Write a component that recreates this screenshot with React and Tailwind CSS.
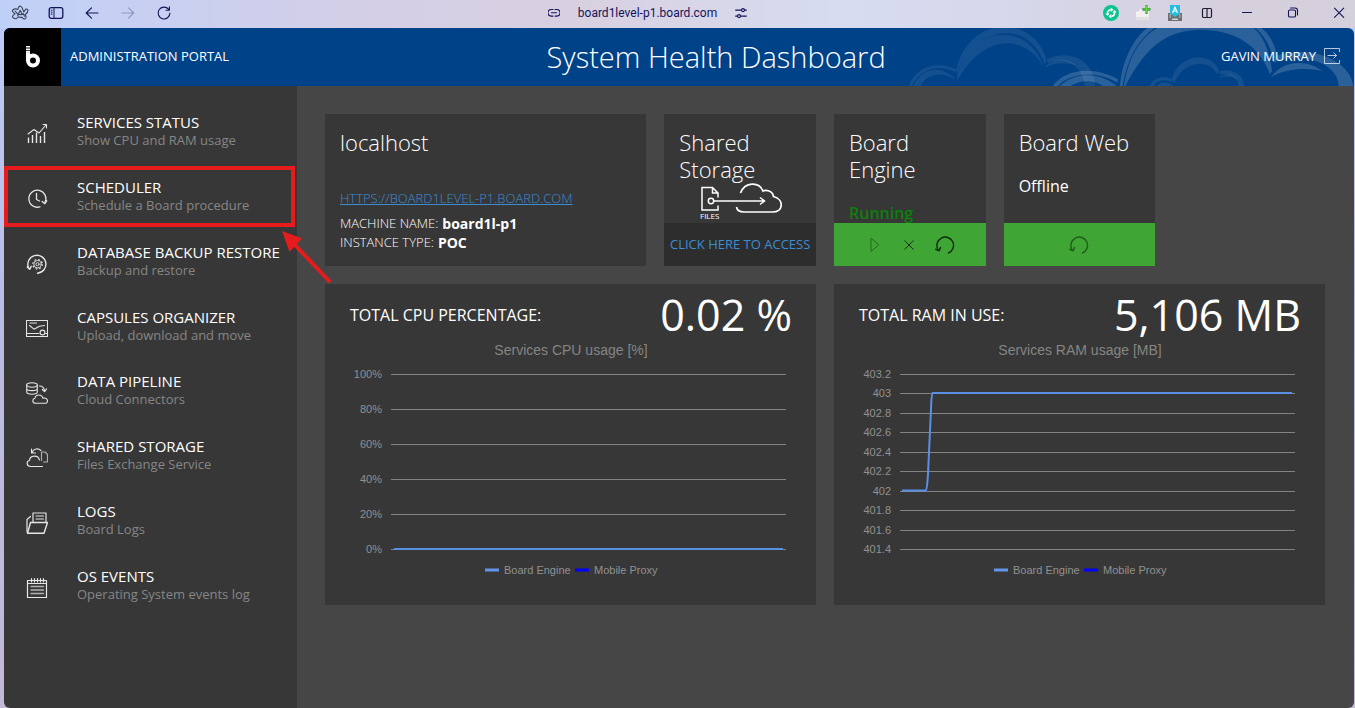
import React from "react";

const stroke = { fill: "none", stroke: "currentColor", strokeLinecap: "round", strokeLinejoin: "round" };

/* ---------- browser bar icons ---------- */

function Icon({ children, className = "size-4", box = "0 0 16 16", width = 1.1 }) {
  return (
    <svg viewBox={box} className={className} strokeWidth={width} aria-hidden="true" {...stroke}>
      {children}
    </svg>
  );
}

const ArcIcon = () => (
  <Icon className="size-4 overflow-visible text-[#3b3f55]" width={1.1}>
    <path d="M8.500 1.200c-1.300-.3-1.900.8-2.200 1.700L5.700 4.600 3.500 3.700C1.900 3.700.4 5 .4 6.200c.3 1.200 1.500 1.900 2.700 2.700-1.200.8-2.600 1.300-2.600 2.600.3 1.500 2 2.200 3.500 2.200 1-.1 1.700-1 2.300-1.900 1.200.5 2.500.7 3.800.4.6 1.200 1.300 2 2.600 1.700 1.300-.4 1.700-1.500 1.200-2.600l-.8-1.500c1.600-1.300 2.900-2.900 2.900-4.600-.3-1.500-2.500-1.500-2.900-.2-.2.800-.8 1.400-1.400 1.900l-1.500-4c-.3-.8-.8-1.500-1.700-1.700z" />
    <path d="M3.300 6.200c.8 1.300 2 2.500 3.400 3.200M8.200 5.200l-2.600 5.600M8.600 6l1.600 3.400M6.800 9.300c1.500.6 3 .3 4.600-.6M11.600 9.300l.9 2" />
  </Icon>
);

const SidebarIcon = () => (
  <Icon width={1.3}>
    <rect x="1.200" y="2.700" width="13.600" height="10.600" rx="2" />
    <path d="M6 2.700v10.600M3.200 5.200h.9M3.200 7.200h.9M3.200 9.200h.9" strokeWidth="1" />
  </Icon>
);

const LinkIcon = () => (
  <Icon className="size-3" box="0 0 12 12">
    <path d="M5 2.500H3.300a3.300 3.300 0 0 0 0 6.600H5M7 2.500h1.700a3.300 3.300 0 0 1 0 6.600H7M3.500 5.800h5" />
  </Icon>
);

const SlidersIcon = () => (
  <Icon className="size-3" box="0 0 12 12">
    <path d="M.6 3.100h5.800M9.600 3.100h1.800M.6 9.100h1.800M5.600 9.100h5.800" />
    <circle cx="8" cy="3.100" r="1.500" />
    <circle cx="4" cy="9.100" r="1.500" />
  </Icon>
);

function BarButton({ label, children, className = "" }) {
  return (
    <button type="button" aria-label={label} className={`flex size-4 items-center justify-center ${className}`}>
      {children}
    </button>
  );
}

function BrowserBar() {
  return (
    <div className="flex h-7 items-center justify-between pr-2 pb-[3px] pl-3 text-[#14145a]">
      <div className="flex gap-5">
        <BarButton label="Arc menu"><ArcIcon /></BarButton>
        <BarButton label="Toggle sidebar"><SidebarIcon /></BarButton>
        <BarButton label="Back">
          <Icon><path d="M14 8H2.200M7.500 2.800 2.200 8l5.300 5.200" /></Icon>
        </BarButton>
        <BarButton label="Forward" className="text-[#8f95c4]">
          <Icon><path d="M2 8h11.800M8.500 2.800 13.800 8l-5.300 5.200" /></Icon>
        </BarButton>
        <BarButton label="Reload">
          <Icon><path d="M12.500 4.200A5.900 5.900 0 1 0 13.900 8M13.400 1.800v3.400H10" /></Icon>
        </BarButton>
      </div>
      <div className="flex flex-1 items-center justify-center gap-[18px] pl-5">
        <LinkIcon />
        <span className="font-['Roboto','Open_Sans',sans-serif] text-[12px] leading-4">board1level-p1.board.com</span>
        <SlidersIcon />
      </div>
      <div className="flex items-center gap-4">
        <BarButton label="Sync extension">
          <svg viewBox="0 0 16 16" className="size-4" aria-hidden="true">
            <circle cx="8" cy="8" r="8" fill="#0cc390" />
            <path d="M4.500 9.500V8A3.200 3.200 0 0 1 7.700 4.800M11.500 6.500V8a3.200 3.200 0 0 1-3.200 3.200" fill="none" stroke="#fff" strokeWidth="1.600" />
            <path d="M7.700 2.600 10.500 4.800 7.700 7zM8.300 9v4.400L5.500 11.200zM2.500 8.500h4L4.500 10.900zM13.500 7.500h-4l2-2.400z" fill="#fff" />
          </svg>
        </BarButton>
        <BarButton label="Add extension">
          <svg viewBox="0 0 16 16" className="size-4" aria-hidden="true">
            <path d="M1 6.500h3V5l1.500-1L7 5v1.500h7V14a1 1 0 0 1-1 1H2a1 1 0 0 1-1-1z" fill="#f2f1f0" />
            <path d="M1 12h13v2a1 1 0 0 1-1 1H2a1 1 0 0 1-1-1z" fill="#e2e0e0" />
            <path d="M10.500 0h2v3h3v2.500h-3v3.500h-2V5.500H7.500V3h3z" fill="#2f8f2b" />
            <path d="M11 .8h1v2.800h3v1h-3v3.200h-1V4.600H8v-1h3z" fill="#6ddb55" />
          </svg>
        </BarButton>
        <BarButton label="Keyboard extension">
          <svg viewBox="0 0 16 16" className="size-4" aria-hidden="true">
            <path d="M1 8h14v8H1z" fill="#6d6f72" />
            <path d="M2.500 9.500h1.500v1H2.500zM12 9.500h1.500v1H12zM2.500 11.500h1.500v1H2.500zM12 11.500h1.500v1H12zM5 13.500h6v1.500H5z" fill="#d3d3d3" />
            <path d="M3 0h10v8.500L8 12 3 8.500z" fill="#26bede" />
            <path d="M5.500 8 8 2.200 10.500 8M6.400 6h3.200" fill="none" stroke="#fff" strokeWidth="1.200" />
          </svg>
        </BarButton>
        <BarButton label="Split view" className="text-[#1c1c30]">
          <Icon width={1.2}><rect x="3.500" y="3.500" width="9" height="9" rx="1.200" /><path d="M8 3.500v9" /></Icon>
        </BarButton>
        <div className="ml-2 flex gap-[30px]">
          <BarButton label="Minimize"><Icon><path d="M3.500 7.500h9" /></Icon></BarButton>
          <BarButton label="Restore">
            <Icon>
              <rect x="3.500" y="5" width="7" height="7" rx="1.300" />
              <path d="M5.500 3h4.500a2.500 2.500 0 0 1 2.500 2.500V10" />
            </Icon>
          </BarButton>
          <BarButton label="Close"><Icon><path d="m3.500 3.200 9.200 9.200M12.700 3.200l-9.200 9.200" /></Icon></BarButton>
        </div>
      </div>
    </div>
  );
}

/* ---------- header ---------- */

function HeaderClouds() {
  return (
    <svg viewBox="0 84 1362 174" className="absolute top-0 right-0 h-[58px] w-[454px]" aria-hidden="true">
      <g fill="#ffffff" fillOpacity="0.08">
        <path d="M168 212C205 44 400 40 440 180L434 194C395 64 235 64 170 222z" />
        <path d="M172 222C225 70 385 66 432 203C375 100 250 100 172 242z" />
        <path d="M26 258C45 205 105 178 168 208L166 216C110 190 60 208 36 258z" />
        <path d="M40 258C65 202 125 192 168 240C120 212 80 222 62 258z" />
        <path d="M440 178C510 145 580 180 586 258H554C552 215 510 160 444 188z" />
        <path d="M434 203C450 176 500 168 528 196C490 184 455 190 434 203z" />
      </g>
      <g fill="#ffffff" fillOpacity="0.17">
        <path d="M660 258C665 180 705 110 742 84H764C712 120 680 180 668 258z" />
        <path d="M672 258C684 170 725 110 772 84H1062C1090 110 1108 150 1116 214L1110 222C1075 130 1000 90 900 89C810 92 745 125 676 258z" />
        <path d="M1066 84H1084C1106 100 1124 130 1130 164L1120 178C1112 140 1096 110 1066 84z" />
        <path d="M1122 170C1230 130 1350 180 1360 258H1316C1316 200 1230 150 1118 188z" />
        <path d="M1114 231C1145 182 1220 175 1268 214C1220 202 1160 205 1114 231z" />
        <path d="M458 258C500 202 590 200 654 238L652 248C590 210 510 218 474 258z" />
        <path d="M480 258C525 214 600 216 650 258H610C580 238 540 240 512 258z" />
      </g>
      <g fill="#ffffff" fillOpacity="0.08">
        <path d="M816 236C835 158 940 153 958 214L950 222C930 175 850 180 822 250z" />
        <path d="M750 258C760 232 790 226 818 238L816 246C790 236 770 242 762 258z" />
        <path d="M770 258C782 244 806 244 818 258z" />
        <path d="M958 214C1000 204 1032 225 1032 258H1016C1014 230 990 220 958 222z" />
        <path d="M954 234C972 218 1000 220 1012 236C990 228 975 228 954 234z" />
      </g>
    </svg>
  );
}

function Header() {
  return (
    <header className="relative flex h-[58px] items-center overflow-hidden rounded-t-md bg-[#004287]">
      <HeaderClouds />
      <a href="#home" aria-label="Home" className="flex h-full w-[57px] items-center justify-center bg-black">
        <svg viewBox="0 0 14 22" className="h-[22px] w-[14px]" aria-hidden="true">
          <path d="M0 0h4v1.600H0zM0 2.400h4V4H0zM0 4.800h4v2H0z" fill="#fff" />
          <path d="M2 6.500v8" stroke="#fff" strokeWidth="4" />
          <circle cx="7" cy="14.500" r="5" fill="none" stroke="#fff" strokeWidth="4" />
        </svg>
      </a>
      <p className="relative pb-0.5 pl-[9px] text-[13px] leading-5 whitespace-nowrap text-white">ADMINISTRATION PORTAL</p>
      <h1 className="relative flex-1 pr-[18px] text-center text-[29px] leading-9 font-light text-white">
        System Health Dashboard
      </h1>
      <div className="relative flex items-center gap-2 pr-[14px] pb-0.5">
        <span className="text-[13px] leading-5 whitespace-nowrap text-white">GAVIN MURRAY</span>
        <button type="button" aria-label="Log out" className="text-white/70">
          <svg viewBox="0 0 16 16" className="size-4" aria-hidden="true" fill="none" stroke="currentColor">
            <path d="M15.500 4V.5H.5v15h15V12" />
            <path d="M3.500 7.500h9M9.500 4.500l3 3-3 3" />
          </svg>
        </button>
      </div>
    </header>
  );
}

/* ---------- sidebar ---------- */

const NAV = [
  {
    title: "SERVICES STATUS",
    text: "Show CPU and RAM usage",
    icon: (
      <>
        <path d="M2.500 20v-5.500M6.500 20v-8M10.500 20V9.500M14.500 20v-7M18.500 20V9" strokeWidth="1.400" strokeLinecap="butt" />
        <path d="M2 11 8 6.500l5 3.500 7-8M17 1.500h3.500V5" />
      </>
    ),
  },
  {
    title: "SCHEDULER",
    text: "Schedule a Board procedure",
    highlighted: true,
    icon: (
      <>
        <path d="M19 14.500A8.500 8.500 0 1 0 14 18.800" strokeWidth="1.300" />
        <path d="M10.500 5.500v6l3 1.500M16.200 13.500l2.600 2.200 2-3" strokeWidth="1.300" />
      </>
    ),
  },
  {
    title: "DATABASE BACKUP RESTORE",
    text: "Backup and restore",
    icon: (
      <>
        <path d="M2.500 14.500a9 9 0 1 1 9 5.700M1.300 14l2.300 2.300 1.600-3" strokeWidth="1.400" />
        <circle cx="11.500" cy="11.200" r="1.600" strokeWidth="0.900" />
        <circle cx="11.500" cy="11.200" r="3.700" strokeWidth="0.900" />
        <circle cx="11.500" cy="11.200" r="4.700" strokeWidth="1.300" strokeDasharray="1.700 2" strokeLinecap="butt" />
      </>
    ),
  },
  {
    title: "CAPSULES ORGANIZER",
    text: "Upload, download and move",
    icon: (
      <>
        <path d="M.5 2.500h21v16H.5zM.5 15.500h12.500M19.500 15.500h2" />
        <path d="M4 5h6.500M3.500 7.500l4.500 3.700 5.500-3 5-.7" />
        <circle cx="16.500" cy="14.500" r="2.400" />
      </>
    ),
  },
  {
    title: "DATA PIPELINE",
    text: "Cloud Connectors",
    icon: (
      <>
        <ellipse cx="6" cy="3" rx="5.300" ry="2.200" />
        <path d="M.7 3v7c0 3 10.600 3 10.600 0V3M.7 6.500c0 2.800 10.600 2.800 10.600 0M13.500 4c3 0 4.700 1.500 5 5M16.300 7.500l2.300 2.200 2-2.800" />
        <path d="M9.500 21.300c-3.500 0-3.500-4.500-.5-5 .5-4.500 7-4.500 8 0 1-.8 4.300 0 4.500 2.400.1 1.600-1 2.600-2.500 2.600z" />
      </>
    ),
  },
  {
    title: "SHARED STORAGE",
    text: "Files Exchange Service",
    icon: (
      <>
        <path d="M16.500 19.500H4.500c-4 0-4.500-5.500-1-6 .5-5.500 8.500-6 10-.5M6 5.500C7.500 1.500 12 .8 15 3.500M5.500 2v4H9.500" />
        <path d="M15.500 5h3.500l2.500 2.500M21.500 7.500v7M15.500 5v8.500M17.500 15h4" strokeOpacity="0.700" />
      </>
    ),
  },
  {
    title: "LOGS",
    text: "Board Logs",
    icon: (
      <>
        <path d="M4.500 10.500h17L18 21.200H1.500z" strokeWidth="1.400" />
        <path d="M1 20V7.500l3.500-3M7 10V1h13v9.500M10 4h7.500M10 7h7.500" strokeWidth="1.200" />
      </>
    ),
  },
  {
    title: "OS EVENTS",
    text: "Operating System events log",
    icon: (
      <>
        <path d="M1.500 3.500h19v17h-19zM1.500 6.500h19" strokeWidth="1.200" />
        <path d="M5.500 1.500V5M8.500 1.500V5M11.500 1.500V5M14.500 1.500V5M17.500 1.500V5" strokeWidth="1.200" />
        <path d="M5 9.500h12.500M5 13h12.500M5 16.500h12.500" strokeWidth="1.400" strokeOpacity="0.700" />
      </>
    ),
  },
];

function Callout() {
  return (
    <>
      <span className="pointer-events-none absolute top-0.5 left-0 h-[61px] w-[291px] border-4 border-[#e61c1c]" />
      <svg
        viewBox="0 0 52 54"
        className="pointer-events-none absolute top-[67px] left-[277px] z-10 h-[54px] w-[52px]"
        aria-hidden="true"
      >
        <path d="M14 14 49 51" stroke="#e61c1c" strokeWidth="4" />
        <path d="M1 0 21 7.500 8.500 21z" fill="#e61c1c" />
      </svg>
    </>
  );
}

function Sidebar() {
  return (
    <nav className="w-[293px] shrink-0 rounded-bl-md bg-[#373737] pt-[13px]">
      <ul className="grid h-[518px] auto-rows-fr">
        {NAV.map((item) => (
          <li key={item.title} className="relative">
            <a href="#section" className="flex h-full items-center gap-[29px] pl-[22px]">
              <svg viewBox="0 0 22 22" className="mt-[6px] size-[22px] shrink-0 text-[#e6e6e6]" strokeWidth="1.100" aria-hidden="true" {...stroke}>
                {item.icon}
              </svg>
              <span className="flex flex-col">
                <span className="text-[15px] leading-[18px] whitespace-nowrap text-white">{item.title}</span>
                <span className="text-[13px] leading-[18px] whitespace-nowrap text-[#868686]">{item.text}</span>
              </span>
            </a>
            {item.highlighted && <Callout />}
          </li>
        ))}
      </ul>
    </nav>
  );
}

/* ---------- service cards ---------- */

function Card({ title, className = "", children, footer }) {
  return (
    <section className={`flex flex-col bg-[#373737] ${className}`}>
      <div className="relative h-[109px] px-[15px] pt-[15px]">
        <h2 className="text-[22px] leading-[27px] font-light text-white">{title}</h2>
        {children}
      </div>
      {footer}
    </section>
  );
}

function RestartIcon() {
  return (
    <svg viewBox="0 0 20 18" className="h-[18px] w-5" strokeWidth="1.400" aria-hidden="true" {...stroke}>
      <path d="M3 13.500A8.300 8.300 0 1 1 13.500 17M.8 13.300l3.400 1.500 1.300-3.300" />
    </svg>
  );
}

function FilesToCloud() {
  return (
    <svg viewBox="0 0 82 40" className="absolute top-[69px] left-[36px] h-10 w-[82px]" aria-hidden="true" fill="none" stroke="#fff" strokeWidth="1.500">
      <path d="M18 22.500V27H2V4.500h10.500L18 10v4.500M12.500 4.500V10H18" />
      <circle cx="11" cy="18" r="2.700" />
      <path d="M14 18h50M60 14.500l4.500 3.500-4.500 3.500" />
      <path d="M40.500 10C45-1.500 59-1.500 63 8c3-1.500 9.500-.5 10.500 5.500 11 3 10 15.500-1 15.500H44c-4 0-7-2-7.500-5" strokeWidth="1.700" />
      <text x="0" y="36" fill="#fff" stroke="none" fontSize="8" className="font-['Open_Sans',sans-serif]">FILES</text>
    </svg>
  );
}

/* ---------- charts ---------- */

function UsageChart({ title, ticks, line, label }) {
  const top = 20;
  const bottom = 195;
  const step = (bottom - top) / (ticks.length - 1);
  return (
    <svg
      viewBox="0 54 491 267"
      role="img"
      aria-label={label}
      className="block w-full font-['Liberation_Sans',Arial,sans-serif]"
    >
      <g transform="translate(0 70)">
        <text x="246" y="1" fill="#858585" fontSize="14" textAnchor="middle">{title}</text>
        {ticks.map((tick, i) => (
          <g key={tick}>
            <path d={`M66 ${Math.round(top + i * step) + 0.5}H461`} stroke="#838383" strokeWidth="1" />
            <text x="57" y={Math.round(top + i * step) + 4} fill="#919191" fontSize="11" textAnchor="end">{tick}</text>
          </g>
        ))}
        <path d={line} fill="none" stroke="#5b8fe6" strokeWidth="2" strokeLinejoin="round" />
        <path d="M160 216h14" stroke="#6495ed" strokeWidth="3" />
        <text x="179" y="220" fill="#919191" fontSize="11">Board Engine</text>
        <path d="M250 216h14" stroke="#0000ff" strokeWidth="3" />
        <text x="269" y="220" fill="#919191" fontSize="11">Mobile Proxy</text>
      </g>
    </svg>
  );
}

function ChartPanel({ heading, value, ...chart }) {
  return (
    <section className="col-span-3 bg-[#373737]">
      <div className="flex h-[54px] items-center justify-between pt-2 pr-6 pl-[25px]">
        <h2 className="text-[16px] leading-6 text-white">{heading}</h2>
        <p className="text-[43px] leading-[54px] whitespace-nowrap text-white">{value}</p>
      </div>
      <UsageChart {...chart} label={chart.title} />
    </section>
  );
}

const CPU = {
  heading: "TOTAL CPU PERCENTAGE:",
  value: "0.02 %",
  title: "Services CPU usage [%]",
  ticks: ["100%", "80%", "60%", "40%", "20%", "0%"],
  line: "M69 195H458",
};

const RAM = {
  heading: "TOTAL RAM IN USE:",
  value: "5,106 MB",
  title: "Services RAM usage [MB]",
  ticks: ["403.2", "403", "402.8", "402.6", "402.4", "402.2", "402", "401.8", "401.6", "401.4"],
  line: "M68 136.500H92Q93 136.500 94 120L97 55Q97.500 39 98.500 39H458",
};

export default function App() {
  return (
    <div className="flex min-h-screen flex-col bg-[linear-gradient(90deg,#bfd0f8_0%,#d3cfe8_25%,#d8d0e0_42%,#d7dcf0_62%,#d6d7ea_75%,#d6cfdc_92%,#d4d0dc_100%)] font-['Open_Sans','Noto_Sans',sans-serif]">
      <BrowserBar />
      <div className="flex flex-1 flex-col bg-[linear-gradient(180deg,#bccbf6,#b9bbe2_45%,#c3b8d6)] pr-px pl-1">
        <Header />
        <div className="flex flex-1">
          <Sidebar />
          <main className="grid flex-1 grid-cols-6 content-start gap-[18px] rounded-br-md bg-[#464646] pt-7 pr-[29px] pl-7">
            <Card title="localhost" className="col-span-2 h-[152px]">
              <div className="absolute top-[75px] left-[15px] whitespace-nowrap">
                <a href="#instance" className="block text-[13px] leading-[19px] font-light text-[#3c8dd4] underline">
                  HTTPS://BOARD1LEVEL-P1.BOARD.COM
                </a>
                <dl className="mt-[6px] text-[13px] leading-[19px] text-white">
                  <div className="flex h-[19px] items-center gap-1">
                    <dt className="font-light">MACHINE NAME:</dt>
                    <dd className="text-[14px] font-bold">board1l-p1</dd>
                  </div>
                  <div className="flex h-[19px] items-center gap-1">
                    <dt className="font-light">INSTANCE TYPE:</dt>
                    <dd className="text-[14px] font-bold">POC</dd>
                  </div>
                </dl>
              </div>
            </Card>
            <Card
              title="Shared Storage"
              footer={
                <a href="#storage" className="flex h-[43px] items-center justify-center bg-[#2d2d2d] text-[13px] whitespace-nowrap text-[#3c8dd4]">
                  CLICK HERE TO ACCESS
                </a>
              }
            >
              <FilesToCloud />
            </Card>
            <Card
              title="Board Engine"
              footer={
                <div className="flex h-[43px] items-center justify-center gap-[18px] bg-[#3fa535] pl-[3px] text-[#0f2a0d]">
                  <button type="button" aria-label="Start" className="flex w-4 justify-center opacity-50">
                    <svg viewBox="0 0 10 16" className="h-4 w-[10px]" aria-hidden="true" {...stroke}>
                      <path d="M1 1.500v13L8.500 8z" />
                    </svg>
                  </button>
                  <button type="button" aria-label="Stop" className="flex w-4 justify-center">
                    <svg viewBox="0 0 10 10" className="size-[10px]" aria-hidden="true" {...stroke}>
                      <path d="m.8.8 8.400 8.400M9.200.8.8 9.200" />
                    </svg>
                  </button>
                  <button type="button" aria-label="Restart"><RestartIcon /></button>
                </div>
              }
            >
              <p className="mt-5 text-[16px] leading-5 font-semibold text-[#0b800b]">Running</p>
            </Card>
            <Card
              title="Board Web"
              footer={
                <div className="flex h-[43px] items-center justify-center bg-[#3fa535] text-[#0f2a0d]">
                  <button type="button" aria-label="Restart" className="opacity-60"><RestartIcon /></button>
                </div>
              }
            >
              <p className="mt-5 text-[16px] leading-5 font-medium text-white">Offline</p>
            </Card>
            <ChartPanel {...CPU} />
            <ChartPanel {...RAM} />
          </main>
        </div>
      </div>
    </div>
  );
}
